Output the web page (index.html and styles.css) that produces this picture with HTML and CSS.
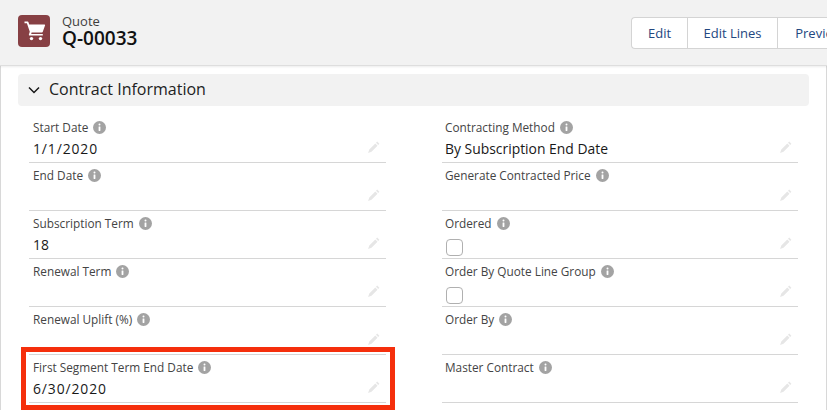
FILE: index.html
```html
<!DOCTYPE html>
<html lang="en">
<head>
<meta charset="utf-8">
<title>Quote Q-00033</title>
<link rel="stylesheet" href="styles.css">
</head>
<body>
<svg class="sprite" width="0" height="0" aria-hidden="true">
  <symbol id="info" viewBox="0 0 13 13">
    <circle cx="6.5" cy="6.5" r="6.5" fill="#a3a3a3"/>
    <circle cx="6.5" cy="3.6" r="1" fill="#fff"/>
    <rect x="5.6" y="5.4" width="1.8" height="4.6" rx=".4" fill="#fff"/>
  </symbol>
  <symbol id="pencil" viewBox="0 0 13 13">
    <path d="M10.2 .6l2.2 2.2-1.2 1.2-2.2-2.2zM8.3 2.5l2.2 2.2-6 6-3.4 1.2 1.2-3.4z" fill="#e6e6e6"/>
  </symbol>
</svg>
<header class="page-header">
  <div class="title-block">
    <span class="object-icon">
      <svg width="32" height="32" viewBox="0 0 32 32"><path d="M6.5 6.6h3.2c.3 0 .6.2.7.5l.8 2.3h15.3c.4 0 .7.4.6.8l-2.4 6.9c-.1.3-.4.5-.7.5H13.6l-.4 1.4h11.6v1.6H11.6c-.5 0-.9-.5-.7-1l.9-2.9L8.9 8.3H6.5z" fill="#fff"/><circle cx="13.5" cy="23.6" r="1.7" fill="#fff"/><circle cx="22.5" cy="23.6" r="1.7" fill="#fff"/></svg>
    </span>
    <div class="titles">
      <div class="eyebrow">Quote</div>
      <div class="record-name">Q-00033</div>
    </div>
  </div>
  <div class="actions">
    <button class="btn">Edit</button>
    <button class="btn btn-lines">Edit Lines</button>
    <button class="btn btn-preview">Preview</button>
  </div>
</header>
<main class="card">
  <div class="section-head">
    <svg class="chevron" width="12" height="8" viewBox="0 0 12 8"><path d="M1 1.5l5 5 5-5" fill="none" stroke="#181818" stroke-width="1.5"/></svg>
    <span class="section-title">Contract Information</span>
  </div>
  <div class="fields">
    <div class="field"><div class="label">Start Date <svg class="info"><use href="#info"/></svg></div><div class="value value-date">1/1/2020</div><svg class="pencil"><use href="#pencil"/></svg></div>
    <div class="field"><div class="label">Contracting Method <svg class="info"><use href="#info"/></svg></div><div class="value">By Subscription End Date</div><svg class="pencil"><use href="#pencil"/></svg></div>
    <div class="field"><div class="label">End Date <svg class="info"><use href="#info"/></svg></div><div class="value"></div><svg class="pencil"><use href="#pencil"/></svg></div>
    <div class="field"><div class="label">Generate Contracted Price <svg class="info"><use href="#info"/></svg></div><div class="value"></div><svg class="pencil"><use href="#pencil"/></svg></div>
    <div class="field"><div class="label">Subscription Term <svg class="info"><use href="#info"/></svg></div><div class="value">18</div><svg class="pencil"><use href="#pencil"/></svg></div>
    <div class="field"><div class="label">Ordered <svg class="info"><use href="#info"/></svg></div><div class="value"><span class="checkbox"></span></div><svg class="pencil"><use href="#pencil"/></svg></div>
    <div class="field"><div class="label">Renewal Term <svg class="info"><use href="#info"/></svg></div><div class="value"></div><svg class="pencil"><use href="#pencil"/></svg></div>
    <div class="field"><div class="label">Order By Quote Line Group <svg class="info"><use href="#info"/></svg></div><div class="value"><span class="checkbox"></span></div><svg class="pencil"><use href="#pencil"/></svg></div>
    <div class="field"><div class="label">Renewal Uplift (%) <svg class="info"><use href="#info"/></svg></div><div class="value"></div><svg class="pencil"><use href="#pencil"/></svg></div>
    <div class="field"><div class="label">Order By <svg class="info"><use href="#info"/></svg></div><div class="value"></div><svg class="pencil"><use href="#pencil"/></svg></div>
    <div class="field"><div class="label">First Segment Term End Date <svg class="info"><use href="#info"/></svg></div><div class="value value-date">6/30/2020</div><svg class="pencil"><use href="#pencil"/></svg><div class="highlight"></div></div>
    <div class="field"><div class="label">Master Contract <svg class="info"><use href="#info"/></svg></div><div class="value"></div><svg class="pencil"><use href="#pencil"/></svg></div>
  </div>
</main>
</body>
</html>
```
FILE: styles.css
```css
* { box-sizing: border-box; }
html, body { margin: 0; height: 100%; }
body {
  width: 827px;
  height: 410px;
  overflow: hidden;
  background: #fff;
  font-family: "Open Sans", "Noto Sans", sans-serif;
  color: #181818;
}
.sprite { position: absolute; }
.page-header {
  position: relative;
  height: 66px;
  background: #f2f2f2;
  border-bottom: 1px solid #dedede;
  box-shadow: 0 1px 2px rgba(0, 0, 0, .08);
  display: flex;
  justify-content: space-between;
  padding: 15px 0 0 18px;
  overflow: hidden;
}
.title-block { display: flex; gap: 12px; }
.object-icon {
  width: 32px;
  height: 32px;
  border-radius: 4px;
  background: #874044;
  display: flex;
}
.titles { margin-top: -1px; }
.eyebrow { font-size: 13px; line-height: 14px; color: #3e3e3c; }
.record-name { font-size: 19px; line-height: 20px; font-weight: 600; color: #111; }
.actions {
  display: flex;
  height: 32px;
  margin-top: 2px;
  width: 196px;
  flex: none;
  background: #fff;
  border: 1px solid #d4d4d4;
  border-right: 0;
  border-radius: 4px 0 0 4px;
  overflow: hidden;
}
.btn {
  flex: none;
  height: 100%;
  width: 56px;
  padding: 0;
  border: 0;
  border-right: 1px solid #d4d4d4;
  background: transparent;
  font: 13px "Open Sans", "Noto Sans", sans-serif;
  color: #23477f;
}
.btn-lines { width: 90px; }
.btn-preview { width: 82px; border-right: 0; }
.card {
  height: 344px;
  border-left: 1px solid #d8d8d8;
  border-right: 1px solid #d8d8d8;
  padding: 8px 17px 0 17px;
}
.section-head {
  height: 32px;
  background: #f2f2f2;
  border-radius: 4px;
  display: flex;
  align-items: center;
  gap: 9px;
  padding-left: 10px;
  font-size: 16px;
  color: #222;
}
.section-title { margin-top: -2px; }
.fields {
  display: grid;
  grid-template-columns: 357px 356px;
  column-gap: 56px;
  grid-auto-rows: 48px;
  margin: 9px 0 0 11px;
}
.field { position: relative; border-bottom: 1px solid #d6d6d6; padding: 5px 0 0 4px; }
.field:nth-child(even) { padding-left: 3px; }
.label {
  display: flex;
  align-items: center;
  gap: 2px;
  font-size: 11.8px;
  line-height: 15px;
  color: #444;
  white-space: pre;
}
.info { width: 13px; height: 13px; }
.value { display: flow-root; font-size: 13.9px; line-height: 20px; margin-top: 4px; color: #181818; }
.value-date { letter-spacing: .9px; }
.checkbox {
  display: block;
  width: 17px;
  height: 17px;
  margin: 4px 0 0 1px;
  border: 1px solid #b0b0b0;
  border-radius: 4px;
  background: #fff;
}
.pencil { position: absolute; right: 6px; bottom: 8px; width: 13px; height: 13px; }
.highlight {
  position: absolute;
  left: -8px;
  top: -8px;
  width: 374px;
  height: 63px;
  border: 5px solid #f52f0c;
  pointer-events: none;
}
```
